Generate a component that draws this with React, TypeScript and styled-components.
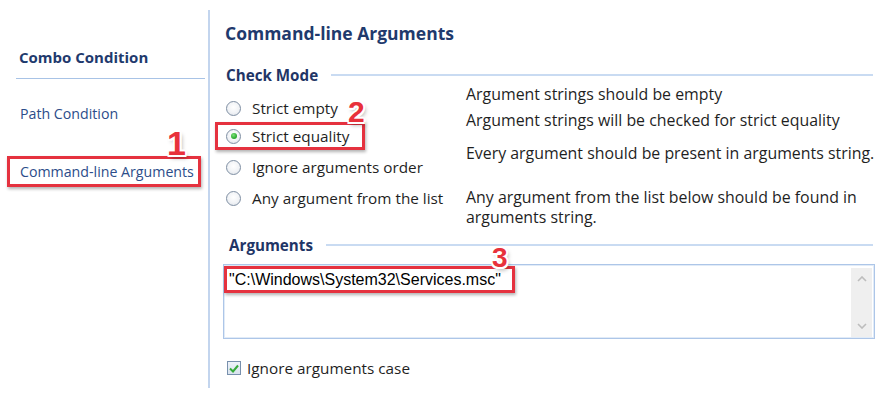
import React from 'react';
import styled, { createGlobalStyle } from 'styled-components';

const Global = createGlobalStyle`
  *, *::before, *::after { box-sizing: border-box; }
  html, body { margin: 0; padding: 0; background: #ffffff; }
  body {
    font-family: "Open Sans", "Noto Sans", sans-serif;
    color: #1f1f1f;
  }
`;

const Page = styled.div`
  width: 895px;
  height: 410px;
  display: flex;
  align-items: flex-start;
  overflow: hidden;
  background: #ffffff;
`;

const Sidebar = styled.nav`
  flex: none;
  width: 210px;
  height: 378px;
  margin-top: 10px;
  padding: 37px 3px 0 7px;
  border-right: 2px solid #c3d5ee;
  display: flex;
  flex-direction: column;
`;

const SidebarTitle = styled.div`
  margin-left: 9px;
  padding: 0 0 11px 3px;
  border-bottom: 1px solid #a8c3e6;
  font-size: 15px;
  font-weight: 700;
  line-height: 20px;
  color: #1f3a6d;
`;

const NavList = styled.div`
  margin-top: 19px;
  display: flex;
  flex-direction: column;
  gap: 27px;
`;

const Highlightable = styled.div<{ $marked?: boolean }>`
  position: relative;
  align-self: flex-start;
  border: 3px solid ${(p) => (p.$marked ? '#e5323f' : 'transparent')};
  box-shadow: ${(p) => (p.$marked ? '1px 2px 3px rgba(0,0,0,0.3)' : 'none')};
`;

const NavItem = styled(Highlightable)`
  padding: 3px 4px 3px 10px;
  font-size: 14.2px;
  line-height: 19px;
  color: #2c4d8a;
  white-space: nowrap;
`;

const Marker = styled.span<{ $size: number; $top: number; $left: number }>`
  position: absolute;
  top: ${(p) => p.$top}px;
  left: ${(p) => p.$left}px;
  font-family: "Liberation Sans", Arial, sans-serif;
  font-weight: 700;
  font-size: ${(p) => p.$size}px;
  line-height: 1;
  color: #e8313b;
  pointer-events: none;
  text-shadow:
    -2px 0 #fff, 2px 0 #fff, 0 -2px #fff, 0 2px #fff,
    -1.5px -1.5px #fff, 1.5px 1.5px #fff, -1.5px 1.5px #fff, 1.5px -1.5px #fff,
    2px 3px 4px rgba(0, 0, 0, 0.35);
`;

const Main = styled.main`
  flex: 1;
  min-width: 0;
  padding: 23px 22px 0 15px;
  display: flex;
  flex-direction: column;
`;

const PageTitle = styled.h1`
  margin: 0;
  font-size: 17.5px;
  font-weight: 700;
  line-height: 20px;
  color: #1f3a6d;
`;

const SectionHeader = styled.div<{ $indent: number; $top: number }>`
  margin-top: ${(p) => p.$top}px;
  padding-left: ${(p) => p.$indent}px;
  display: flex;
  align-items: center;
  gap: 13px;
  font-size: 15.2px;
  font-weight: 700;
  line-height: 20px;
  color: #1f3566;
`;

const Rule = styled.div`
  flex: 1;
  height: 2px;
  background: #c9dbf2;
`;

const Options = styled.div`
  margin-top: -1px;
  display: flex;
`;

const RadioColumn = styled.div`
  flex: none;
  width: 251px;
  margin-left: -10px;
  padding-top: 10px;
  display: flex;
  flex-direction: column;
`;

const RadioRow = styled(Highlightable)`
  height: 28px;
  padding: 0 13px 0 8px;
  display: flex;
  align-items: center;
  gap: 11px;
  font-size: 15.3px;
  color: #1f1f1f;
  white-space: nowrap;
  &:nth-child(n + 3) {
    margin-top: 3px;
  }
`;

const RadioCircle = styled.span<{ $checked?: boolean }>`
  position: relative;
  width: 15px;
  height: 15px;
  flex: none;
  border-radius: 50%;
  border: 1px solid #7f8fa3;
  background: radial-gradient(circle at 50% 40%, #ffffff 0%, #f1f3f6 55%, #d9dee5 100%);
  &::after {
    content: '';
    display: ${(p) => (p.$checked ? 'block' : 'none')};
    position: absolute;
    left: 3.5px;
    top: 3.5px;
    width: 6px;
    height: 6px;
    border-radius: 50%;
    background: radial-gradient(circle at 40% 35%, #7fe07a 0%, #2fae34 60%, #1e8c25 100%);
  }
`;

const DescColumn = styled.div`
  flex: 1;
  min-width: 0;
  display: flex;
  flex-direction: column;
  font-size: 15.9px;
  line-height: 20px;
  color: #1f1f1f;
  white-space: nowrap;
`;

const Description = styled.div<{ $space: number }>`
  margin-top: ${(p) => p.$space}px;
`;

const TextBox = styled.div`
  margin: 9px -2px 0 -2px;
  height: 75px;
  border: 1px solid #adc6e8;
  box-shadow: inset 0 0 0 1px #e1ebf7;
  display: flex;
  background: #fff;
`;

const TextLines = styled.div`
  flex: 1;
  padding-top: 1px;
`;

const ArgumentLine = styled(Highlightable)`
  display: inline-block;
  padding: 0 11px 0 2px;
  font-family: "Liberation Sans", Arial, sans-serif;
  font-size: 16px;
  line-height: 21px;
  color: #000;
`;

const Scrollbar = styled.div`
  width: 21px;
  margin: 3px 2px 1px 0;
  background: #efefef;
  display: flex;
  flex-direction: column;
  justify-content: space-between;
  align-items: center;
  padding: 8px 0 8px;
`;

const CheckRow = styled.label`
  margin: 19px 0 0 2px;
  display: flex;
  align-items: center;
  gap: 6px;
  font-size: 15.3px;
  line-height: 20px;
  color: #1f1f1f;
`;

const CheckBox = styled.span`
  width: 14px;
  height: 14px;
  flex: none;
  border: 1px solid #7890ad;
  background: linear-gradient(#eef3f9, #d9e3ee);
  display: flex;
  align-items: center;
  justify-content: center;
`;

const Chevron = ({ up }: { up?: boolean }) => (
  <svg width="10" height="6" viewBox="0 0 10 6">
    <path
      d={up ? 'M1 5 L5 1 L9 5' : 'M1 1 L5 5 L9 1'}
      fill="none"
      stroke="#bdbdbd"
      strokeWidth="1.6"
    />
  </svg>
);

const options = [
  { label: 'Strict empty', checked: false },
  { label: 'Strict equality', checked: true },
  { label: 'Ignore arguments order', checked: false },
  { label: 'Any argument from the list', checked: false },
];

const descriptions = [
  { text: ['Argument strings should be empty'], space: 0 },
  { text: ['Argument strings will be checked for strict equality'], space: 6 },
  { text: ['Every argument should be present in arguments string.'], space: 13 },
  { text: ['Any argument from the list below should be found in', 'arguments string.'], space: 24 },
];

export default function App() {
  return (
    <>
      <Global />
      <Page>
        <Sidebar>
          <SidebarTitle>Combo Condition</SidebarTitle>
          <NavList>
            <NavItem>Path Condition</NavItem>
            <NavItem $marked>
              Command-line Arguments
              <Marker $size={34} $top={-33} $left={157}>1</Marker>
            </NavItem>
          </NavList>
        </Sidebar>
        <Main>
          <PageTitle>Command-line Arguments</PageTitle>
          <SectionHeader $indent={1} $top={22}>
            Check Mode
            <Rule />
          </SectionHeader>
          <Options>
            <RadioColumn>
              {options.map((o) => (
                <RadioRow key={o.label} $marked={o.checked}>
                  <RadioCircle $checked={o.checked} />
                  {o.label}
                  {o.checked && (
                    <Marker $size={30} $top={-28} $left={130}>2</Marker>
                  )}
                </RadioRow>
              ))}
            </RadioColumn>
            <DescColumn>
              {descriptions.map((d) => (
                <Description key={d.text[0]} $space={d.space}>
                  {d.text.map((t, i) => (
                    <React.Fragment key={t}>
                      {i > 0 && <br />}
                      {t}
                    </React.Fragment>
                  ))}
                </Description>
              ))}
            </DescColumn>
          </Options>
          <SectionHeader $indent={4} $top={8}>
            Arguments
            <Rule />
          </SectionHeader>
          <TextBox>
            <TextLines>
              <ArgumentLine $marked>
                "C:\Windows\System32\Services.msc"
                <Marker $size={28} $top={-25} $left={265}>3</Marker>
              </ArgumentLine>
            </TextLines>
            <Scrollbar>
              <Chevron up />
              <Chevron />
            </Scrollbar>
          </TextBox>
          <CheckRow>
            <CheckBox>
              <svg width="10" height="9" viewBox="0 0 10 9">
                <path d="M1 4.5 L4 7.5 L9 1.5" fill="none" stroke="#36aa3a" strokeWidth="2" />
              </svg>
            </CheckBox>
            Ignore arguments case
          </CheckRow>
        </Main>
      </Page>
    </>
  );
}
